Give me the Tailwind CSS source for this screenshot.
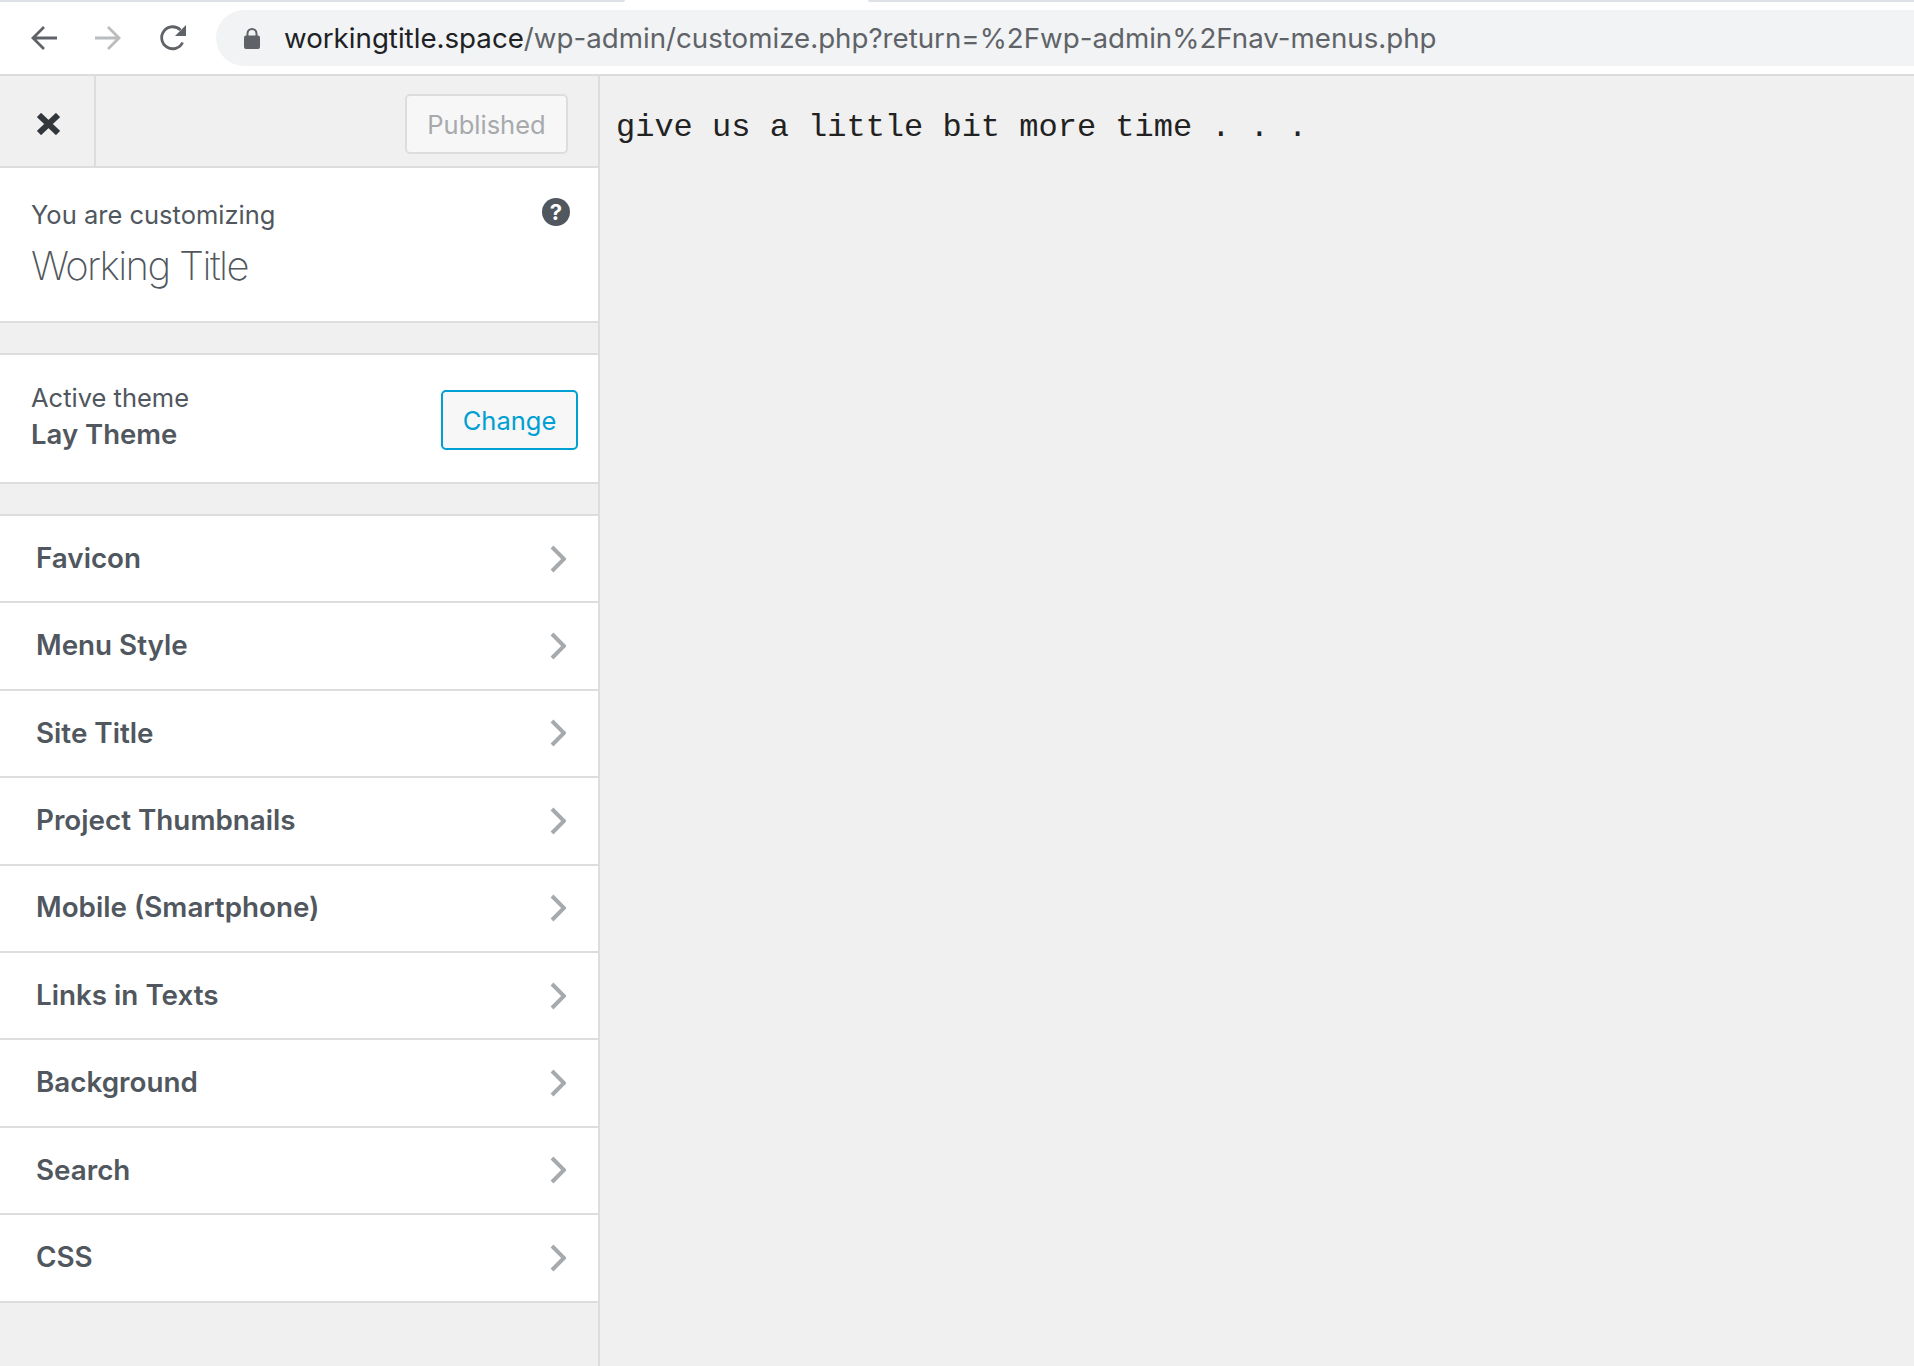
<!DOCTYPE html>
<html lang="en">
<head>
    <meta charset="UTF-8">
    <title>Customize: Working Title</title>
    <script src="https://cdn.jsdelivr.net/npm/@tailwindcss/browser@4"></script>
</head>
<body class="bg-white font-[Inter,sans-serif]">
    <div class="w-[1914px] h-[1366px] overflow-hidden flex flex-col">
        <!-- Tab strip remnant -->
        <div class="h-[2px] flex shrink-0">
            <div class="w-[625px] bg-[#dee1e6] rounded-br-md"></div>
            <div class="w-[243px]"></div>
            <div class="flex-1 bg-[#dee1e6] rounded-bl-md"></div>
        </div>

        <!-- Browser toolbar -->
        <div class="h-[72px] shrink-0 flex items-center pl-[31px]">
            <svg class="w-[26px] h-[26px]" viewBox="0 0 26 26" fill="none" stroke="#5f6368" stroke-width="2.8"><path d="M26 13H3M13 2 2 13l11 11"/></svg>
            <svg class="w-[26px] h-[26px] ml-[38px]" viewBox="0 0 26 26" fill="none" stroke="#babcbe" stroke-width="2.8"><path d="M0 13h23M13 2l11 11-11 11"/></svg>
            <svg class="w-[28px] h-[28px] ml-[38px]" viewBox="0 0 28 28" fill="none"><path d="M23.6 18.5A11 11 0 1 1 21.5 6" stroke="#5f6368" stroke-width="2.8"/><path d="M27 1v11H16z" fill="#5f6368"/></svg>
            <div class="ml-[29px] flex-1 h-[56px] bg-[#f1f3f4] rounded-l-[28px] flex items-center pl-[28px]">
                <svg class="w-[16px] h-[21px]" viewBox="0 0 16 21"><path d="M3.5 8V5.5a4.5 4.5 0 0 1 9 0V8" fill="none" stroke="#5f6368" stroke-width="2"/><rect y="7.5" width="16" height="13.5" rx="2" fill="#5f6368"/></svg>
                <div class="ml-[24px] pt-[2px] text-[27.7px] leading-none whitespace-nowrap text-[#5f6368]"><span class="text-[#202124]">workingtitle.space</span>/wp-admin/customize.php?return=%2Fwp-admin%2Fnav-menus.php</div>
            </div>
        </div>

        <div class="flex-1 flex min-h-0 border-t-2 border-[#dcdcde] bg-[#f0f0f0]">
            <!-- Customizer sidebar -->
            <div class="w-[600px] shrink-0 border-r-2 border-[#dddddd] flex flex-col">
                <div class="h-[92px] shrink-0 border-b-2 border-[#dddddd] flex items-center">
                    <div class="w-[96px] h-full border-r-2 border-[#dddddd] flex items-center pl-[37px] pt-[5px]">
                        <svg class="w-[23px] h-[22px]" viewBox="0 0 23 22" fill="none" stroke="#32373c" stroke-width="6"><path d="M2 2l19 18M21 2 2 20"/></svg>
                    </div>
                    <div class="flex-1 flex justify-end pr-[30px] pt-[5px]">
                        <div class="w-[163px] h-[60px] pt-[3px] rounded-[5px] border-2 border-[#dddddd] bg-[#f7f7f7] flex items-center justify-center text-[25.5px] text-[#a7aaad]">Published</div>
                    </div>
                </div>

                <!-- Site info -->
                <div class="h-[155px] shrink-0 bg-white border-b-2 border-[#dddddd] pl-[31px] pr-[28px] pt-[31px] flex justify-between items-start">
                    <div class="text-[#50575e]">
                        <div class="text-[25.5px] leading-[32px]">You are customizing</div>
                        <div class="text-[40px] leading-[48px] mt-[11px] font-extralight tracking-[-1.6px]">Working Title</div>
                    </div>
                    <div class="w-[28px] h-[28px] -mt-[1px] rounded-full bg-[#50575e] text-white text-[22px] font-bold leading-[28px] text-center">?</div>
                </div>

                <div class="h-[30px] shrink-0"></div>

                <!-- Active theme -->
                <div class="h-[131px] shrink-0 bg-white border-y-2 border-[#dddddd] pl-[31px] pr-[20px] flex items-center justify-between text-[#50575e]">
                    <div class="-mt-[6px]">
                        <div class="text-[25.5px] leading-[36px]">Active theme</div>
                        <div class="text-[27.5px] leading-[36px] font-semibold">Lay Theme</div>
                    </div>
                    <div class="w-[137px] h-[60px] mt-[2px] pt-[3px] rounded-[5px] border-2 border-[#00a0d2] bg-[#f7f7f7] text-[#00a0d2] text-[25.5px] flex items-center justify-center">Change</div>
                </div>

                <div class="h-[30px] shrink-0"></div>

                <!-- Sections -->
                <div class="shrink-0 bg-white border-y-2 border-[#dddddd] flex flex-col text-[#50575e] text-[27.8px] font-semibold">
                    <div class="h-[87.4px] flex items-center justify-between pl-[36px] pr-[32px] border-b-2 border-[#dddddd]">Favicon<svg class="w-[16px] h-[28px]" viewBox="0 0 16 28" fill="none" stroke="#a7aaad" stroke-width="4"><path d="M2 2l12 12L2 26"/></svg></div>
                    <div class="h-[87.4px] flex items-center justify-between pl-[36px] pr-[32px] border-b-2 border-[#dddddd]">Menu Style<svg class="w-[16px] h-[28px]" viewBox="0 0 16 28" fill="none" stroke="#a7aaad" stroke-width="4"><path d="M2 2l12 12L2 26"/></svg></div>
                    <div class="h-[87.4px] flex items-center justify-between pl-[36px] pr-[32px] border-b-2 border-[#dddddd]">Site Title<svg class="w-[16px] h-[28px]" viewBox="0 0 16 28" fill="none" stroke="#a7aaad" stroke-width="4"><path d="M2 2l12 12L2 26"/></svg></div>
                    <div class="h-[87.4px] flex items-center justify-between pl-[36px] pr-[32px] border-b-2 border-[#dddddd]">Project Thumbnails<svg class="w-[16px] h-[28px]" viewBox="0 0 16 28" fill="none" stroke="#a7aaad" stroke-width="4"><path d="M2 2l12 12L2 26"/></svg></div>
                    <div class="h-[87.4px] flex items-center justify-between pl-[36px] pr-[32px] border-b-2 border-[#dddddd]">Mobile (Smartphone)<svg class="w-[16px] h-[28px]" viewBox="0 0 16 28" fill="none" stroke="#a7aaad" stroke-width="4"><path d="M2 2l12 12L2 26"/></svg></div>
                    <div class="h-[87.4px] flex items-center justify-between pl-[36px] pr-[32px] border-b-2 border-[#dddddd]">Links in Texts<svg class="w-[16px] h-[28px]" viewBox="0 0 16 28" fill="none" stroke="#a7aaad" stroke-width="4"><path d="M2 2l12 12L2 26"/></svg></div>
                    <div class="h-[87.4px] flex items-center justify-between pl-[36px] pr-[32px] border-b-2 border-[#dddddd]">Background<svg class="w-[16px] h-[28px]" viewBox="0 0 16 28" fill="none" stroke="#a7aaad" stroke-width="4"><path d="M2 2l12 12L2 26"/></svg></div>
                    <div class="h-[87.4px] flex items-center justify-between pl-[36px] pr-[32px] border-b-2 border-[#dddddd]">Search<svg class="w-[16px] h-[28px]" viewBox="0 0 16 28" fill="none" stroke="#a7aaad" stroke-width="4"><path d="M2 2l12 12L2 26"/></svg></div>
                    <div class="h-[86px] flex items-center justify-between pl-[36px] pr-[32px]">CSS<svg class="w-[16px] h-[28px]" viewBox="0 0 16 28" fill="none" stroke="#a7aaad" stroke-width="4"><path d="M2 2l12 12L2 26"/></svg></div>
                </div>
            </div>

            <!-- Preview -->
            <div class="flex-1 pl-[16px] pt-[32px] font-['Liberation_Mono',monospace] text-[32px] leading-[40px] text-[#222222] whitespace-pre">give us a little bit more time . . .</div>
        </div>
    </div>
</body>
</html>
